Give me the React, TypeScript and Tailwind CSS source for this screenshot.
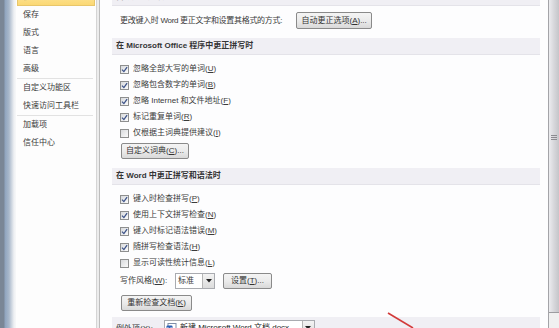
import React from 'react';

function Check({ on = true }: { on?: boolean }) {
  return (
    <span className="w-[9px] h-[9px] shrink-0 border border-[#8e8f8f] bg-linear-to-br from-[#d8dadd] to-[#fbfbfb] flex items-center justify-center">
      {on && (
        <svg width="7" height="7" viewBox="0 0 7 7">
          <path d="M1 3.6 L2.9 5.6 L6.1 1.2" stroke="#3d5389" strokeWidth="1.3" fill="none" />
        </svg>
      )}
    </span>
  );
}

function Btn({ children, className = '' }: { children: React.ReactNode; className?: string }) {
  return (
    <div
      className={
        'h-[16px] shrink-0 rounded-[2px] border border-[#8a8a8a] bg-linear-to-b from-[#f4f4f4] via-[#ebebeb] to-[#d9d9d9] flex items-center justify-center text-[#333] ' +
        className
      }
    >
      {children}
    </div>
  );
}

function Band({ children, className = '' }: { children: React.ReactNode; className?: string }) {
  return (
    <div
      className={
        'ml-[12px] mr-[8px] h-[17px] shrink-0 bg-[#f0eff4] border-b border-[#e4e3e9] flex items-center pl-[4px] font-bold text-[#343434] ' +
        className
      }
    >
      {children}
    </div>
  );
}

function Row({ on = true, children }: { on?: boolean; children: React.ReactNode }) {
  return (
    <div className="h-[16px] flex items-center gap-[4px]">
      <Check on={on} />
      <span>{children}</span>
    </div>
  );
}

function Arrow() {
  return (
    <div className="w-[12px] h-full border-l border-[#b5b5b5] bg-linear-to-b from-[#f3f3f3] to-[#dcdcdc] flex items-center justify-center">
      <svg width="6" height="4" viewBox="0 0 6 4">
        <path d="M0 0 H6 L3 3.5 Z" fill="#222" />
      </svg>
    </div>
  );
}

const menu = ['保存', '版式', '语言', '高级'];

export default function App() {
  return (
    <div className="relative w-[559px] h-[328px] overflow-hidden bg-white flex font-['Liberation_Sans','Noto_Sans_CJK_SC',sans-serif] text-[8px] leading-none text-[#3a3a3a]">
      {/* window frame */}
      <div className="w-[16px] shrink-0 bg-[linear-gradient(to_right,#7a8696_0px,#7a8696_4px,#8fa4bf_5px,#a9b8cb_9px,#d3dae3_12px,#eef0f3_14px,#f7f8f9_16px)]" />

      {/* left menu */}
      <div className="w-[80px] shrink-0 bg-[#fdfdfd] flex flex-col px-px">
        <div className="-mt-[12px] h-[18px] shrink-0 border border-[#e8c66a] bg-linear-to-b from-[#fdeaa8] to-[#fbd874] flex items-center pl-[5px]">
          校对
        </div>
        {menu.map((m) => (
          <div key={m} className="h-[18px] shrink-0 flex items-center pl-[6px]">
            {m}
          </div>
        ))}
        <div className="h-px shrink-0 mr-[2px] bg-[#e2e2e2]" />
        <div className="h-[18px] shrink-0 flex items-center pl-[6px]">自定义功能区</div>
        <div className="h-[18px] shrink-0 flex items-center pl-[6px]">快速访问工具栏</div>
        <div className="h-px shrink-0 mr-[2px] bg-[#e2e2e2]" />
        <div className="h-[18px] shrink-0 flex items-center pl-[6px]">加载项</div>
        <div className="h-[18px] shrink-0 flex items-center pl-[6px]">信任中心</div>
      </div>

      {/* divider */}
      <div className="w-[4px] shrink-0 border-l border-[#d4d4d4] bg-[#ececec] border-r border-r-[#bdbdbd]" />

      {/* options */}
      <div className="flex-1 flex flex-col bg-[#fdfdfe]">
        <Band className="-mt-[11px]">自动更正选项</Band>
        <div className="flex items-center pl-[20px] pt-[6px]">
          <span className="tracking-[-0.3px]">更改键入时 Word 更正文字和设置其格式的方式:</span>
          <Btn className="ml-[14px] w-[76px] h-[17px] border-[#3c7fb1] from-[#f0f8fd] via-[#e2f1fb] to-[#c9e4f6]">
            自动更正选项(<u>A</u>)...
          </Btn>
        </div>

        <Band className="mt-[9px]">在 Microsoft Office 程序中更正拼写时</Band>
        <div className="flex flex-col pl-[20px] pt-[6px]">
          <Row>忽略全部大写的单词(<u>U</u>)</Row>
          <Row>忽略包含数字的单词(<u>B</u>)</Row>
          <Row>忽略 Internet 和文件地址(<u>F</u>)</Row>
          <Row>标记重复单词(<u>R</u>)</Row>
          <Row on={false}>仅根据主词典提供建议(<u>I</u>)</Row>
        </div>
        <Btn className="mt-[2px] ml-[21px] w-[68px]">
          自定义词典(<u>C</u>)...
        </Btn>

        <Band className="mt-[9px]">在 Word 中更正拼写和语法时</Band>
        <div className="flex flex-col pl-[20px] pt-[6px]">
          <Row>键入时检查拼写(<u>P</u>)</Row>
          <Row>使用上下文拼写检查(<u>N</u>)</Row>
          <Row>键入时标记语法错误(<u>M</u>)</Row>
          <Row>随拼写检查语法(<u>H</u>)</Row>
          <Row on={false}>显示可读性统计信息(<u>L</u>)</Row>
        </div>
        <div className="mt-[2px] h-[16px] flex items-center pl-[20px]">
          <span className="w-[55px]">写作风格(<u>W</u>):</span>
          <div className="w-[40px] h-[16px] border border-[#a9abb0] bg-white flex items-center">
            <span className="flex-1 pl-[2px]">标准</span>
            <Arrow />
          </div>
          <Btn className="ml-[8px] w-[49px]">
            设置(<u>T</u>)...
          </Btn>
        </div>
        <Btn className="mt-[6px] ml-[21px] w-[71px]">
          重新检查文档(<u>K</u>)
        </Btn>

        <Band className="mt-[6px] h-[20px] items-start pt-[3px] pl-[1px] font-normal">
          <span className="mt-[5px]">例外项(<u>X</u>):</span>
          <div className="ml-[11px] w-[151px] h-[16px] border border-[#a9abb0] bg-white flex items-center">
            <svg width="11" height="11" viewBox="0 0 11 11" className="ml-[1px]">
              <rect x="2" y="0.5" width="8" height="10" fill="#fff" stroke="#7f8ea8" />
              <rect x="0.5" y="2.5" width="6" height="6" rx="1" fill="#2b5fb4" />
              <path d="M1.8 4 L2.6 7.2 L3.5 5.2 L4.4 7.2 L5.2 4" stroke="#fff" strokeWidth="0.8" fill="none" />
            </svg>
            <span className="flex-1 pl-[3px] text-[#222]">新建 Microsoft Word 文档.docx</span>
            <Arrow />
          </div>
        </Band>
      </div>

      {/* scrollbar */}
      <div className="w-[11px] shrink-0 flex flex-col border-l border-[#a4a4a8] bg-[#f0f0f0]">
        <div className="h-[313px] shrink-0 bg-linear-to-r from-[#ececef] via-[#d7d7db] to-[#c5c5c9] border-b border-[#9c9ca0] flex flex-col items-center pt-[135px] gap-px">
          <div className="w-[6px] h-px bg-[#8b8b90]" />
          <div className="w-[6px] h-px bg-[#8b8b90]" />
          <div className="w-[6px] h-px bg-[#8b8b90]" />
        </div>
      </div>

      {/* annotation */}
      <svg className="absolute left-[385px] top-[310px]" width="32" height="20" viewBox="0 0 32 20">
        <path d="M3 3 L28 18" stroke="#d23a3a" strokeWidth="1.6" />
      </svg>
    </div>
  );
}
